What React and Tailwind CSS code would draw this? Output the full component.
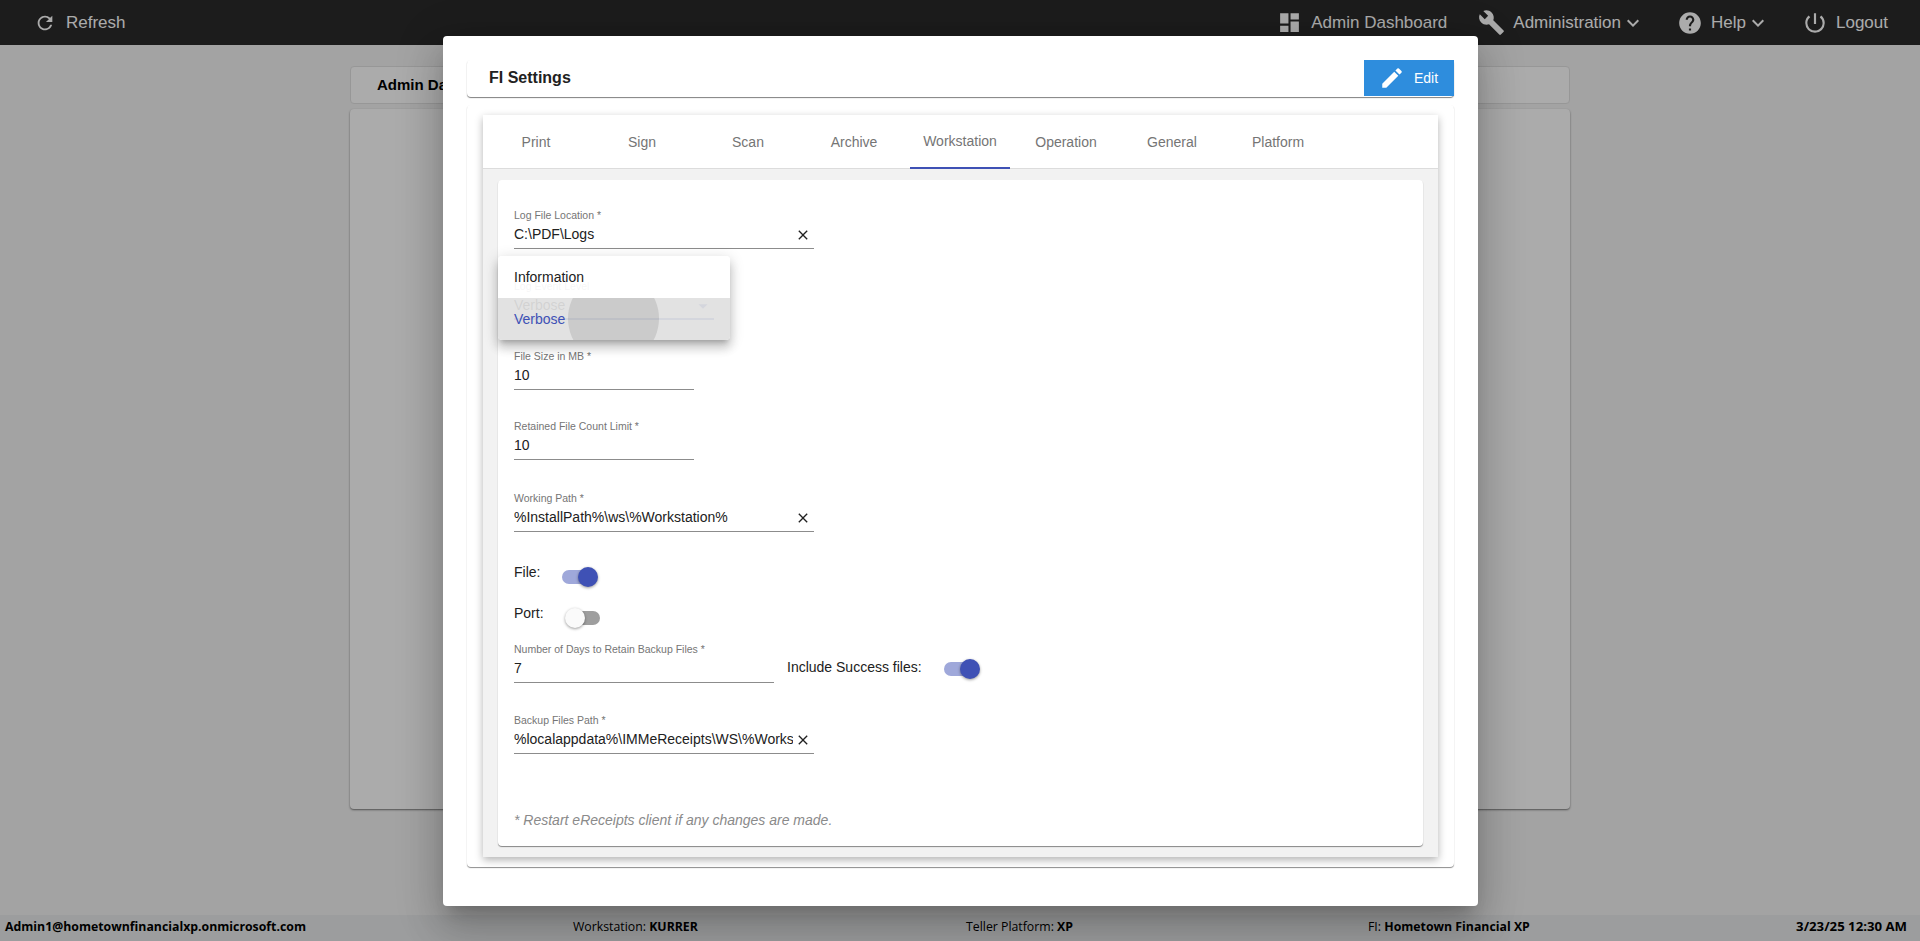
import React from "react";
import {
  MdRefresh,
  MdDashboard,
  MdBuild,
  MdHelp,
  MdPowerSettingsNew,
  MdKeyboardArrowDown,
  MdEdit,
  MdClear,
  MdArrowDropDown,
} from "react-icons/md";

const tabs = ["Print", "Sign", "Scan", "Archive", "Workstation", "Operation", "General", "Platform"];

const NavItem = ({ icon, label, chevron, className }) => (
  <div className={`flex items-center text-[17px] text-white ${className}`}>
    {icon}
    <span>{label}</span>
    {chevron && <MdKeyboardArrowDown className="text-[24px]" />}
  </div>
);

const TextField = ({ label, value, width, clear, className = "" }) => (
  <div className={`h-[41px] border-b border-[#8c8c8c] ${width} ${className}`}>
    <div className="h-[14px] pt-[0.5px] text-[10.5px] leading-[12px] text-[#757575]">{label}</div>
    <div className="flex items-center h-[26px] pb-[1px]">
      <div className="flex-1 min-w-0 overflow-hidden whitespace-nowrap text-[14px] text-[#212121]">{value}</div>
      {clear && <MdClear className="ml-[2px] mr-[3px] shrink-0 text-[16px] text-[#212121]" />}
    </div>
  </div>
);

const Switch = ({ on, className = "" }) => (
  <div className={`relative w-[34px] h-[14px] rounded-full ${on ? "bg-[#9fa8da]" : "bg-[#9e9e9e]"} ${className}`}>
    <div
      className={`absolute top-[-3px] w-[20px] h-[20px] rounded-full shadow-[0_1px_3px_rgba(0,0,0,0.4)] ${
        on ? "right-[-2px] bg-[#3f51b5]" : "left-[-1px] bg-[#fafafa]"
      }`}
    />
  </div>
);

const App = () => {
  return (
    <div className="relative h-[941px] overflow-hidden flex flex-col bg-[#f3f3f3] font-['Liberation_Sans',sans-serif]">
      {/* Top bar */}
      <header className="h-[45px] shrink-0 flex items-center bg-[#2a2a2a]">
        <NavItem
          className="ml-[34px]"
          icon={<MdRefresh className="mr-[10px] text-[22px]" />}
          label="Refresh"
        />
        <div className="ml-auto flex items-center">
          <NavItem icon={<MdDashboard className="mr-[9px] text-[25px]" />} label="Admin Dashboard" />
          <NavItem className="ml-[31px]" icon={<MdBuild className="mr-[8px] text-[27px]" />} label="Administration" chevron />
          <NavItem className="ml-[32px]" icon={<MdHelp className="mr-[8px] text-[26px]" />} label="Help" chevron />
          <NavItem className="ml-[32px] mr-[32px]" icon={<MdPowerSettingsNew className="mr-[8px] text-[26px]" />} label="Logout" />
        </div>
      </header>

      {/* Page behind the dialog */}
      <main className="flex-1 px-[350px] pt-[21px]">
        <div className="h-[38px] flex items-center px-[26px] bg-white rounded-[4px] border border-[#e2e2e2] text-[15px] font-bold text-black">
          Admin Dashboard
        </div>
        <div className="mt-[5px] h-[700px] bg-white rounded-[4px] shadow-[0_1px_2px_rgba(0,0,0,0.5)]" />
      </main>

      {/* Status bar */}
      <footer className="h-[26px] shrink-0 flex items-center pl-[5px] pr-[13px] pb-[2px] bg-[#e9ebec] font-['Open_Sans',sans-serif] text-[12.3px] text-black">
        <div className="w-[568px] font-bold">Admin1@hometownfinancialxp.onmicrosoft.com</div>
        <div className="w-[393px]">
          Workstation: <b>KURRER</b>
        </div>
        <div className="w-[402px]">
          Teller Platform: <b>XP</b>
        </div>
        <div>
          FI: <b>Hometown Financial XP</b>
        </div>
        <div className="ml-auto text-[13.2px] font-bold">3/23/25 12:30 AM</div>
      </footer>

      {/* Dialog */}
      <div className="absolute inset-0 flex justify-center pt-[36px] pl-[1px] bg-black/[0.33]">
        <div className="w-[1035px] h-[870px] p-[24px] bg-white rounded-[4px] shadow-[0_11px_15px_-7px_rgba(0,0,0,0.2),0_24px_38px_3px_rgba(0,0,0,0.14),0_9px_46px_8px_rgba(0,0,0,0.12)]">
          <div className="h-[37px] flex items-center justify-between pl-[22px] bg-white rounded-[4px] shadow-[0_1px_1px_rgba(0,0,0,0.5)]">
            <span className="pb-[2px] text-[16px] font-bold text-[#212121]">FI Settings</span>
            <div className="w-[90px] h-[36px] self-start flex items-center pl-[15px] bg-[#2e8ddd] text-white text-[14px]">
              <MdEdit className="mr-[9px] text-[26px]" />
              Edit
            </div>
          </div>

          <div className="mt-[8px] h-[762px] px-[16px] pt-[10px] pb-[10px] bg-white rounded-[4px] shadow-[0_1px_1px_rgba(0,0,0,0.45)]">
            <div className="h-full flex flex-col shadow-[0_3px_8px_rgba(0,0,0,0.3)]">
              <div className="h-[54px] shrink-0 flex bg-white border-b border-[#dcdcdc]">
                {tabs.map((tab) => (
                  <div
                    key={tab}
                    className={`w-[100px] mx-[3px] h-[54px] flex items-center justify-center text-[14px] text-[#757575] ${
                      tab === "Workstation" ? "border-b-[2px] border-[#3f51b5]" : ""
                    } ${tab === "Print" ? "pt-[1px]" : ""}`}
                  >
                    {tab}
                  </div>
                ))}
              </div>

              <div className="flex-1 min-h-0 p-[11px_15px] bg-[#f2f2f2]">
                <div className="h-full flex flex-col pl-[16px] pt-[28px] bg-white rounded-[4px] shadow-[0_1px_1px_rgba(0,0,0,0.45)]">
                  <TextField label="Log File Location *" value="C:\PDF\Logs" width="w-[300px]" clear />

                  {/* Open select: the field shows through the menu */}
                  <div className="relative w-[200px] mt-[30px] h-[41px] border-b-[2px] border-[#3f51b5]">
                    <div className="h-[14px] pt-[0.5px] text-[10.5px] leading-[12px] text-[#757575]">Log Event Level</div>
                    <div className="flex items-center justify-between h-[25px] text-[14px] text-[#212121]">
                      Verbose
                      <MdArrowDropDown className="text-[22px] text-[#3f51b5]" />
                    </div>
                    <div className="absolute left-[-16px] top-[-23px] w-[232px] rounded-[4px] overflow-hidden text-[14px] shadow-[0_5px_5px_-3px_rgba(0,0,0,0.2),0_8px_10px_1px_rgba(0,0,0,0.14),0_3px_14px_2px_rgba(0,0,0,0.12)]">
                      <div className="h-[42px] flex items-center px-[16px] bg-white/[0.93] text-[#212121]">Information</div>
                      <div className="relative h-[42px] flex items-center px-[16px] overflow-hidden bg-[#e0e0e0]/[0.93] text-[#3f51b5]">
                        <div className="absolute left-[70px] top-[-25px] w-[91px] h-[91px] rounded-full bg-black/[0.1]" />
                        <span className="relative">Verbose</span>
                      </div>
                    </div>
                  </div>

                  <TextField className="mt-[29px]" label="File Size in MB *" value="10" width="w-[180px]" />
                  <TextField className="mt-[29px]" label="Retained File Count Limit *" value="10" width="w-[180px]" />
                  <TextField className="mt-[31px]" label="Working Path *" value="%InstallPath%\ws\%Workstation%" width="w-[300px]" clear />

                  <div className="mt-[33px] h-[24px] flex items-start text-[14px] leading-[14px] text-[#212121]">
                    <span className="w-[48px]">File:</span>
                    <Switch on className="mt-[5px]" />
                  </div>
                  <div className="mt-[17px] h-[24px] flex items-start text-[14px] leading-[14px] text-[#212121]">
                    <span className="w-[52px]">Port:</span>
                    <Switch className="mt-[5px]" />
                  </div>

                  <div className="mt-[12px] flex items-start">
                    <TextField label="Number of Days to Retain Backup Files *" value="7" width="w-[260px]" />
                    <span className="ml-[13px] w-[157px] mt-[18px] text-[14px] leading-[14px] text-[#212121]">Include Success files:</span>
                    <Switch on className="mt-[20px]" />
                  </div>

                  <TextField
                    className="mt-[30px]"
                    label="Backup Files Path *"
                    value="%localappdata%\IMMeReceipts\WS\%Workstation%"
                    width="w-[300px]"
                    clear
                  />

                  <div className="mt-auto mb-[18px] h-[16px] text-[14px] leading-[16px] italic text-[#8a8a8a]">
                    * Restart eReceipts client if any changes are made.
                  </div>
                </div>
              </div>
            </div>
          </div>
        </div>
      </div>
    </div>
  );
};

export default App;
